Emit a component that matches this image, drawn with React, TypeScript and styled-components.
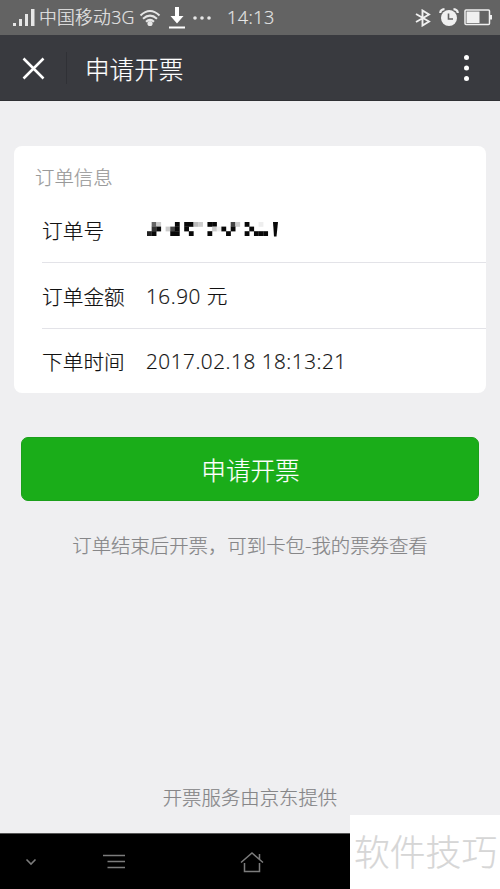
import React from "react";
import styled, { createGlobalStyle } from "styled-components";

const GlobalStyle = createGlobalStyle`
  *, *::before, *::after { box-sizing: border-box; }
  body {
    margin: 0;
    background: #efeff1;
    font-family: "Noto Sans CJK SC", sans-serif;
    font-weight: 300;
    -webkit-text-stroke: 0.2px;
  }
`;

const Screen = styled.div`
  position: relative;
  width: 500px;
  height: 889px;
  display: flex;
  flex-direction: column;
  overflow: hidden;
  background: #efeff1;
`;

const StatusBar = styled.header`
  height: 35px;
  flex: none;
  display: flex;
  align-items: center;
  padding: 0 8px 0 12px;
  background: #636363;
  color: #e6e6e6;
`;

const Carrier = styled.span`
  width: 97px;
  margin-left: 4px;
  font: 300 17.8px/35px "Open Sans", "Noto Sans CJK SC", sans-serif;
  letter-spacing: 0.25px;
  white-space: nowrap;
`;

const Clock = styled.span`
  flex: 1;
  margin-left: 15px;
  font: 300 18px/37px "Open Sans", sans-serif;
  letter-spacing: 0.5px;
`;

const StatusIcon = styled.svg<{ $gap?: number }>`
  flex: none;
  display: block;
  margin-left: ${(p) => p.$gap ?? 0}px;
`;

const TitleBar = styled.nav`
  height: 66px;
  flex: none;
  display: flex;
  align-items: center;
  padding: 1px 30px 0 22px;
  background: #393a3f;
  border-bottom: 1px solid #2f3034;
  color: #fff;
`;

const BarDivider = styled.i`
  width: 1px;
  height: 32px;
  margin-left: 21px;
  background: #303136;
`;

const Title = styled.h1`
  flex: 1;
  margin: 0 0 0 18px;
  font-size: 24.6px;
  line-height: 64px;
  font-weight: 300;
`;

const IconButton = styled.button`
  display: block;
  padding: 0;
  border: 0;
  background: none;
  color: inherit;
  svg { display: block; }
`;

const Content = styled.main`
  flex: 1;
  display: flex;
  flex-direction: column;
  padding: 45px 14px 21px;
`;

const Card = styled.section`
  height: 247px;
  flex: none;
  display: flex;
  flex-direction: column;
  background: #fff;
  border-radius: 8px;
`;

const CardTitle = styled.h2`
  height: 51px;
  margin: 0;
  padding: 16px 0 0 21px;
  font-size: 19.4px;
  line-height: 30px;
  font-weight: 300;
  color: #999;
`;

const Row = styled.div`
  height: 65.5px;
  flex: none;
  display: flex;
  align-items: center;
  margin-left: 28px;
  color: #111;
  font-size: 20.7px;
  line-height: 30px;
  & + & { border-top: 1px solid #e3e3e8; }
`;

const Label = styled.span`
  width: 104px;
  padding-top: 1px;
`;

const Value = styled.span`
  padding-top: 1px;
  font-family: "Open Sans", "Noto Sans CJK SC", sans-serif;
  letter-spacing: 0.54px;
  white-space: pre;
`;

const SubmitButton = styled.button`
  height: 64px;
  flex: none;
  margin: 44px 7px 0;
  padding: 0 0 0 1px;
  border: 1px solid #1b9f1b;
  border-radius: 7px;
  background: #1aad19;
  color: #fff;
  font: 300 24.6px/60px "Noto Sans CJK SC", sans-serif;
`;

const Caption = styled.p<{ $bottom?: boolean }>`
  margin: ${(p) => (p.$bottom ? "auto 0 0" : "29px 0 0")};
  text-align: center;
  font-size: 19.4px;
  line-height: 30px;
  color: #868688;
  white-space: nowrap;
`;

const SystemNav = styled.footer`
  height: 56px;
  flex: none;
  display: flex;
  align-items: center;
  padding-left: 25px;
  background: #000;
  border-top: 1px solid #555;
`;

const NavIcon = styled.svg<{ $gap?: number }>`
  flex: none;
  margin-left: ${(p) => p.$gap ?? 0}px;
  fill: none;
  stroke: #7c7c7c;
`;

const Watermark = styled.aside`
  position: absolute;
  right: 0;
  bottom: 0;
  width: 150px;
  height: 74px;
  padding-left: 4px;
  background: #fff;
  color: #d6d6d6;
  font-size: 35.8px;
  line-height: 70px;
  white-space: nowrap;
`;

const K = "#080808";
const MASK: [number, number, string][] = [
  [1, 0, "#666"], [2, 0, "#ccc"], [1, 1, "#333"], [2, 1, K], [0, 2, "#222"], [1, 2, K],
  [4, 1, "#ccc"], [5, 1, "#444"], [6, 0, K], [6, 1, K], [5, 2, K], [6, 2, K],
  [8, 0, K], [9, 0, K], [10, 0, "#bbb"], [11, 0, "#ccc"], [8, 1, K], [9, 2, K],
  [13, 0, K], [14, 0, K], [14, 1, "#ccc"], [13, 2, K], [15, 1, "#eee"],
  [16, 1, K], [18, 0, "#444"], [19, 0, "#ccc"], [17, 2, K], [18, 1, K],
  [21, 0, K], [22, 1, K], [21, 2, K], [23, 2, K], [24, 2, K], [25, 2, K], [24, 0, "#eee"],
];

function MaskedNumber() {
  return (
    <svg width="134" height="16" viewBox="0 0 134 16">
      {MASK.map(([c, r, fill]) => (
        <rect key={`${c}-${r}`} x={1 + c * 4.65} y={1 + r * 4.6} width="4.8" height="4.8" fill={fill} />
      ))}
      <path d="M127 1h5l-1.500 14.500h-2.500z" fill={K} />
    </svg>
  );
}

export default function App() {
  return (
    <Screen>
      <GlobalStyle />
      <StatusBar>
        <StatusIcon width="23" height="18" fill="#e6e6e6">
          <path d="M1 14h3v3H1zM7 10h3v7H7zM13 5h3v12h-3zM19 0h3.500v17H19z" />
        </StatusIcon>
        <Carrier>中国移动3G</Carrier>
        <StatusIcon $gap={3} width="22" height="18" viewBox="0 0 22 18" fill="none" stroke="#e6e6e6" strokeWidth="2">
          <path d="M1.500 6.500Q11-2.500 20.500 6.500M4 9.800Q11 3.500 18 9.800M7 12.700Q11 9 15 12.700" />
          <circle cx="11" cy="14.5" r="2.6" fill="#e6e6e6" stroke="none" />
        </StatusIcon>
        <StatusIcon $gap={7} width="18" height="24" viewBox="0 0 18 24" fill="#fff">
          <path d="M7 1h4v9h4.500L9 17.500 2.500 10H7zM1 20.500h16v2H1z" />
        </StatusIcon>
        <StatusIcon $gap={6} width="20" height="6" fill="#e6e6e6">
          <circle cx="3" cy="3" r="1.800" /><circle cx="10" cy="3" r="1.800" /><circle cx="17" cy="3" r="1.800" />
        </StatusIcon>
        <Clock>14:13</Clock>
        <StatusIcon width="16" height="18" viewBox="0 0 16 18" fill="none" stroke="#f0f0f0" strokeWidth="1.900">
          <path d="M1 5l13 7.500-6.500 4V1.500l6.500 4L1 13" />
        </StatusIcon>
        <StatusIcon $gap={8} width="20" height="19" viewBox="0 0 20 19">
          <circle cx="10" cy="10" r="8" fill="#f0f0f0" />
          <path d="M1.200 5Q1.500 1.500 5.500 1.200M14.500 1.200Q18.500 1.500 18.800 5" fill="none" stroke="#f0f0f0" strokeWidth="2.200" />
          <path d="M9.500 5.500v5.500H14" fill="none" stroke="#636363" strokeWidth="1.600" />
        </StatusIcon>
        <StatusIcon $gap={5} width="28" height="17" viewBox="0 0 28 17">
          <rect x="1" y="1" width="24.500" height="14.500" rx="1" fill="none" stroke="#f0f0f0" strokeWidth="1.500" />
          <path d="M2.500 2.500H15.500v11.500H2.500zM25.500 6H28v4.500h-2.500z" fill="#f0f0f0" />
        </StatusIcon>
      </StatusBar>

      <TitleBar>
        <IconButton aria-label="关闭">
          <svg width="23" height="23" fill="none" stroke="#fff" strokeWidth="2.500">
            <path d="M1.500 1.500l20 20M21.500 1.500l-20 20" />
          </svg>
        </IconButton>
        <BarDivider />
        <Title>申请开票</Title>
        <IconButton aria-label="更多">
          <svg width="7" height="28" fill="#fff">
            <circle cx="3.500" cy="3.500" r="2.500" /><circle cx="3.500" cy="14" r="2.500" /><circle cx="3.500" cy="24.500" r="2.500" />
          </svg>
        </IconButton>
      </TitleBar>

      <Content>
        <Card>
          <CardTitle>订单信息</CardTitle>
          <Row>
            <Label>订单号</Label>
            <MaskedNumber />
          </Row>
          <Row>
            <Label>订单金额</Label>
            <Value>16.90 元</Value>
          </Row>
          <Row>
            <Label>下单时间</Label>
            <Value>2017.02.18 18:13:21</Value>
          </Row>
        </Card>
        <SubmitButton>申请开票</SubmitButton>
        <Caption>订单结束后开票，可到卡包-我的票券查看</Caption>
        <Caption $bottom>开票服务由京东提供</Caption>
      </Content>

      <SystemNav>
        <NavIcon width="12" height="8" strokeWidth="1.600"><path d="M1.500 1.500L6 6l4.500-4.500" /></NavIcon>
        <NavIcon $gap={66} width="23" height="15" strokeWidth="1.500"><path d="M0 1.500h22M4.500 7.500H22M4.500 13.500H22" /></NavIcon>
        <NavIcon $gap={114} width="24" height="22" strokeWidth="1.500">
          <path d="M1 11.500L12 2l11 9.500M19.500 8V3M4.500 12v8.500h15V12" />
        </NavIcon>
      </SystemNav>
      <Watermark>软件技巧</Watermark>
    </Screen>
  );
}
